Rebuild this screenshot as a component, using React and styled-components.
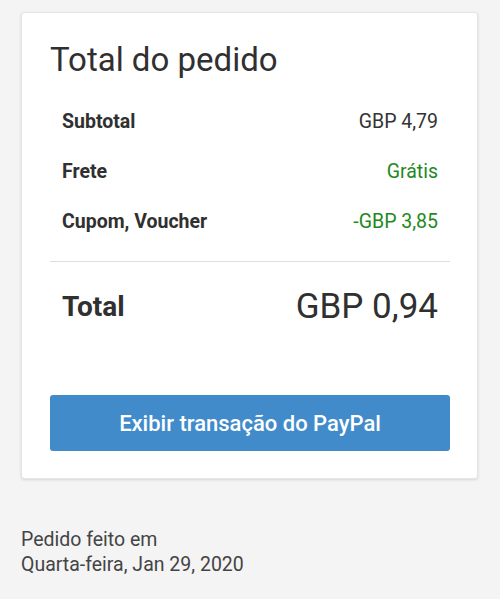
import React from "react";
import styled, { createGlobalStyle } from "styled-components";

const Global = createGlobalStyle`
  html, body { margin: 0; padding: 0; background: #f4f4f4; }
  body { font-family: Roboto, "Noto Sans", sans-serif; color: #333; }
`;

const Page = styled.div`
  padding: 12px 22px 0 21px;
`;

const Card = styled.section`
  background: #fff;
  border: 1px solid #e4e4e4;
  border-radius: 3px;
  box-shadow: 0 1px 3px rgba(0, 0, 0, 0.12);
  padding: 28px 27px 27px 28px;
`;

const Title = styled.h1`
  margin: 0 0 17px 0;
  font-size: 33px;
  line-height: 38px;
  font-weight: 400;
  color: #303030;
`;

const Rows = styled.div`
  padding: 0 12px;
`;

const Row = styled.div`
  display: flex;
  justify-content: space-between;
  align-items: center;
  height: 50px;
  font-size: 19.5px;
`;

const Label = styled.span`
  font-weight: 700;
  color: #303030;
`;

const Value = styled.span`
  color: ${(p) => (p.$green ? "#1e8a1e" : "#333")};
`;

const Divider = styled.hr`
  border: none;
  border-top: 1px solid #ddd;
  margin: 15px 0 0 0;
`;

const TotalRow = styled.div`
  display: flex;
  justify-content: space-between;
  align-items: center;
  padding: 0 12px;
  height: 88px;
  margin-bottom: 45px;
`;

const TotalLabel = styled.span`
  font-size: 28px;
  font-weight: 700;
  color: #303030;
`;

const TotalValue = styled.span`
  font-size: 35px;
  font-weight: 400;
  color: #303030;
`;

const Button = styled.button`
  display: block;
  width: 100%;
  height: 56px;
  border: none;
  border-radius: 3px;
  background: #418bcb;
  color: #fff;
  font-family: Roboto, sans-serif;
  font-size: 22px;
  font-weight: 500;
  cursor: pointer;
`;

const Footer = styled.p`
  margin: 48px 0 0 21px;
  font-size: 19.5px;
  line-height: 25px;
  color: #444;
`;

export default function App() {
  return (
    <>
      <Global />
      <Page>
        <Card>
          <Title>Total do pedido</Title>
          <Rows>
            <Row>
              <Label>Subtotal</Label>
              <Value>GBP 4,79</Value>
            </Row>
            <Row>
              <Label>Frete</Label>
              <Value $green>Grátis</Value>
            </Row>
            <Row>
              <Label>Cupom, Voucher</Label>
              <Value $green>-GBP 3,85</Value>
            </Row>
          </Rows>
          <Divider />
          <TotalRow>
            <TotalLabel>Total</TotalLabel>
            <TotalValue>GBP 0,94</TotalValue>
          </TotalRow>
          <Button>Exibir transação do PayPal</Button>
        </Card>
      </Page>
      <Footer>
        Pedido feito em
        <br />
        Quarta-feira, Jan 29, 2020
      </Footer>
    </>
  );
}
